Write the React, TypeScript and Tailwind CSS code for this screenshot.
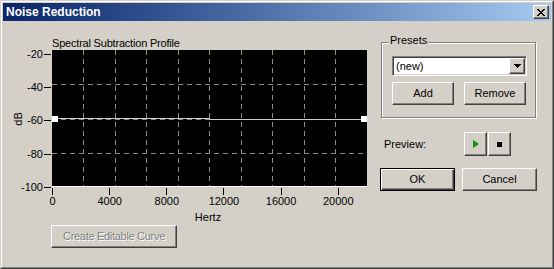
import React from 'react'

const raised =
  'border border-t-white border-l-white border-b-[#404040] border-r-[#404040] shadow-[inset_-1px_-1px_0_#808080] bg-[#d4d0c8]'

// plot geometry, in page pixels
const left = 52
const right = 367
const top = 50
const bottom = 187
const yOf = (db: number) => bottom - ((db + 100) * 5) / 3
const xOf = (hz: number) => left + (hz / 4000) * (315 / 5.5125)

function CloseGlyph() {
  const rows = ['11000011', '01100110', '00111100', '00011000', '00111100', '01100110', '11000011']
  return (
    <svg width="8" height="7" shapeRendering="crispEdges">
      {rows.flatMap((r, y) =>
        r.split('').map((c, x) => (c === '1' ? <rect key={`${x}-${y}`} x={x} y={y} width="1" height="1" fill="#000" /> : null))
      )}
    </svg>
  )
}

function Chart() {
  const vGrid = [1, 2, 3, 4, 5, 6, 7, 8, 9].map(k => Math.floor(left + k * 31.5) + 0.5)
  const hGrid = [84.5, 119.5, 153.5]
  const dbTicks = [-20, -40, -60, -80, -100]
  const hzTicks = [0, 4000, 8000, 12000, 16000, 20000]
  return (
    <svg width="372" height="202" viewBox="3 21 372 202" className="block" fontFamily="'Liberation Sans', Arial, sans-serif" fontSize="11">
      <text x={52} y={47} fill="#000" letterSpacing="-0.2">
        Spectral Subtraction Profile
      </text>
      <rect x={left} y={top} width={right - left} height={bottom - top} fill="#000" />
      <g stroke="#8c8c8c" strokeDasharray="5 4" shapeRendering="crispEdges">
        {vGrid.map(x => (
          <line key={x} x1={x} y1={top} x2={x} y2={bottom - 1} />
        ))}
        {hGrid.map(y => (
          <line key={y} x1={left} y1={y} x2={right} y2={y} />
        ))}
      </g>
      <line x1={left} y1={186.5} x2={right} y2={186.5} stroke="#fff" shapeRendering="crispEdges" />
      <path d="M52 118.5 H209.5 V119.5 H367" fill="none" stroke="#b4dcc4" shapeRendering="crispEdges" />
      <rect x={52} y={116} width={6} height={6} fill="#fff" />
      <rect x={361} y={116} width={6} height={6} fill="#fff" />
      {dbTicks.map(v => (
        <g key={v}>
          <line x1={44} y1={Math.round(yOf(v)) + 0.5} x2={51} y2={Math.round(yOf(v)) + 0.5} stroke="#000" shapeRendering="crispEdges" />
          <text x={43} y={Math.round(yOf(v)) + 4} textAnchor="end" fill="#000">
            {v}
          </text>
        </g>
      ))}
      {hzTicks.map(f => (
        <g key={f}>
          <line x1={Math.round(xOf(f)) + 0.5} y1={188} x2={Math.round(xOf(f)) + 0.5} y2={195} stroke="#000" shapeRendering="crispEdges" />
          <text x={xOf(f) + 0.5} y={205} textAnchor="middle" fill="#000">
            {f}
          </text>
        </g>
      ))}
      <text x={208} y={221} textAnchor="middle" fill="#000">
        Hertz
      </text>
      <text x={22} y={119} textAnchor="middle" transform="rotate(-90 22 119)" fill="#000">
        dB
      </text>
    </svg>
  )
}

export default function App() {
  return (
    <div className="w-[554px] h-[269px] overflow-hidden bg-[#d4d0c8] border border-t-[#d4d0c8] border-l-[#d4d0c8] border-b-[#404040] border-r-[#404040] font-['Liberation_Sans',Arial,sans-serif] text-[11px] leading-[13px] text-black">
      <div className="h-full flex flex-col p-px border border-t-white border-l-white border-b-[#808080] border-r-[#808080]">
        <div className="h-[18px] flex items-center justify-between pl-[3px] pr-[2px] bg-linear-to-r from-[#0a246a] to-[#a6caf0]">
          <span className="text-white font-bold text-[12px] leading-[14px]">Noise Reduction</span>
          <div className={`w-[16px] h-[14px] flex items-center justify-center ${raised}`}>
            <CloseGlyph />
          </div>
        </div>

        <div className="flex flex-1">
          <div className="w-[372px] flex flex-col">
            <Chart />
            <button
              disabled
              className={`mt-[2px] ml-[48px] w-[126px] h-[23px] flex items-center justify-center text-[#808080] tracking-[-0.3px] [text-shadow:1px_1px_0_#fff] ${raised}`}
            >
              Create Editable Curve
            </button>
          </div>

          <div className="flex-1 flex flex-col pl-[5px]">
            <div className="relative mt-[21px] ml-[1px] w-[155px] h-[76px] border border-[#808080] shadow-[inset_1px_1px_0_#fff,1px_1px_0_#fff] pt-[13px] pl-[10px]">
              <span className="absolute left-[7px] top-[-9px] px-[1px] bg-[#d4d0c8]">Presets</span>
              <div className="w-[135px] h-[20px] flex items-center bg-white border border-t-[#808080] border-l-[#808080] border-b-white border-r-white shadow-[inset_1px_1px_0_#404040,inset_-1px_-1px_0_#d4d0c8] p-[1px]">
                <span className="flex-1 pl-[2px]">(new)</span>
                <div className={`w-[16px] h-[16px] flex items-center justify-center ${raised}`}>
                  <svg width="7" height="4" shapeRendering="crispEdges">
                    <path d="M0 0H7V1H6V2H5V3H4V4H3V3H2V2H1V1H0Z" fill="#000" />
                  </svg>
                </div>
              </div>
              <div className="flex gap-[10px] mt-[6px]">
                <button className={`w-[62px] h-[23px] flex items-center justify-center ${raised}`}>Add</button>
                <button className={`w-[62px] h-[23px] flex items-center justify-center ${raised}`}>Remove</button>
              </div>
            </div>

            <div className="flex items-center mt-[14px] h-[24px]">
              <span className="ml-[4px] w-[80px]">Preview:</span>
              <button className={`w-[23px] h-[24px] flex items-center justify-center ${raised}`}>
                <svg width="6" height="8">
                  <polygon points="0,0 6,4 0,8" fill="#109010" />
                </svg>
              </button>
              <button className={`ml-px w-[23px] h-[24px] flex items-center justify-center ${raised}`}>
                <svg width="5" height="5">
                  <rect width="5" height="5" fill="#000" />
                </svg>
              </button>
            </div>

            <div className="flex gap-[7px] mt-[12px]">
              <button className="w-[75px] h-[23px] flex items-center justify-center bg-[#d4d0c8] border border-black shadow-[inset_1px_1px_0_#fff,inset_-1px_-1px_0_#404040,inset_-2px_-2px_0_#808080]">
                OK
              </button>
              <button className={`w-[75px] h-[23px] flex items-center justify-center ${raised}`}>Cancel</button>
            </div>
          </div>
        </div>
      </div>
    </div>
  )
}
